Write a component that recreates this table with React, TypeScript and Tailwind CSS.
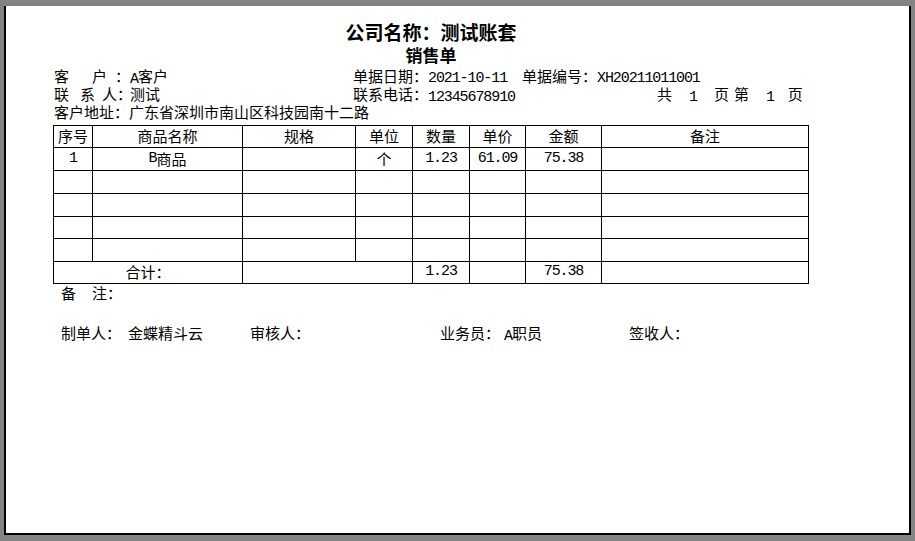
import React from "react";

// half-width latin / digits, narrower than the CJK text around them
function M({ children }: { children: React.ReactNode }) {
  return (
    <span className="font-[family-name:'Liberation_Mono',monospace] text-[15px] tracking-[-1.1px] align-[-1px]">
      {children}
    </span>
  );
}

const HEAD = ["序号", "商品名称", "规格", "单位", "数量", "单价", "金额", "备注"];

const ROWS: React.ReactNode[][] = [
  ["1", <><M>B</M>商品</>, "", "个", "1.23", "61.09", "75.38", ""],
  ["", "", "", "", "", "", "", ""],
  ["", "", "", "", "", "", "", ""],
  ["", "", "", "", "", "", "", ""],
  ["", "", "", "", "", "", "", ""],
];

function Cell({ children, span }: { children?: React.ReactNode; span?: boolean }) {
  const content = typeof children === "string" && /^[\d.]+$/.test(children) ? <M>{children}</M> : children;
  return (
    <div
      className={
        "flex items-center justify-center border-r border-b border-black pb-[2px] leading-none " +
        (span ? "col-span-2" : "")
      }
    >
      {content}
    </div>
  );
}

export default function App() {
  return (
    <div className="h-[541px] w-[915px] bg-[#838383] pt-[6px] pl-[4px] pr-[4px] pb-[6px] overflow-hidden">
      <div className="h-full bg-white border-l-2 border-r-2 border-b-2 border-black text-black text-[15px] font-[family-name:'Noto_Sans_CJK_SC','Noto_Sans',sans-serif]">
        <div className="ml-[47px] w-[756px] pt-[15px]">
          {/* titles */}
          <div className="h-[22px] leading-[22px] text-center text-[19px] font-bold">
            公司名称：测试账套
          </div>
          <div className="mt-[2px] h-[20px] leading-[20px] text-center text-[17px] font-bold">
            销售单
          </div>

          {/* header info */}
          <div className="mt-[2px] pl-[1px] leading-[18px]">
            <div className="flex items-baseline h-[18px]">
              <div className="w-[299px] flex items-baseline">
                <span>客</span>
                <span className="ml-[23px]">户</span>
                <span className="ml-[8px] w-[15px]">：</span>
                <span><M>A</M>客户</span>
              </div>
              <div className="flex items-baseline">
                <span>单据日期：</span>
                <M>2021-10-11</M>
                <span className="ml-[15px]">单据编号：</span>
                <M>XH20211011001</M>
              </div>
            </div>
            <div className="flex items-baseline h-[18px]">
              <div className="w-[299px] flex items-baseline">
                <span>联</span>
                <span className="ml-[11px]">系</span>
                <span className="ml-[7px]">人</span>
                <span className="w-[13px]">：</span>
                <span>测试</span>
              </div>
              <div className="flex items-baseline">
                <span className="w-[304px]">
                  联系电话：<M>12345678910</M>
                </span>
                <span>共</span>
                <span className="ml-[17px]"><M>1</M></span>
                <span className="ml-[17px]">页</span>
                <span className="ml-[5px]">第</span>
                <span className="ml-[17px]"><M>1</M></span>
                <span className="ml-[14px]">页</span>
              </div>
            </div>
            <div className="h-[18px]">客户地址：广东省深圳市南山区科技园南十二路</div>
          </div>

          {/* goods table */}
          <div className="mt-[4px] grid w-[756px] grid-cols-[39px_150px_113px_57px_57px_56px_76px_207px] grid-rows-[22px_23px_23px_23px_22px_23px_22px] border-t border-l border-black">
            {HEAD.map((h) => (
              <Cell key={h}>{h}</Cell>
            ))}
            {ROWS.map((r, i) => r.map((c, j) => <Cell key={i + "-" + j}>{c}</Cell>))}
            <Cell span>合计：</Cell>
            <Cell span></Cell>
            <Cell>1.23</Cell>
            <Cell></Cell>
            <Cell>75.38</Cell>
            <Cell></Cell>
          </div>
        </div>

        {/* remarks + signatures */}
        <div className="ml-[55px] leading-[18px]">
          <div className="flex h-[18px]">
            <span>备</span>
            <span className="ml-[16px]">注：</span>
          </div>
          <div className="mt-[22px] flex items-baseline h-[18px]">
            <span className="w-[67px]">制单人：</span>
            <span className="w-[122px]">金蝶精斗云</span>
            <span className="w-[190px]">审核人：</span>
            <span className="w-[64px]">业务员：</span>
            <span className="w-[125px]"><M>A</M>职员</span>
            <span>签收人：</span>
          </div>
        </div>
      </div>
    </div>
  );
}
